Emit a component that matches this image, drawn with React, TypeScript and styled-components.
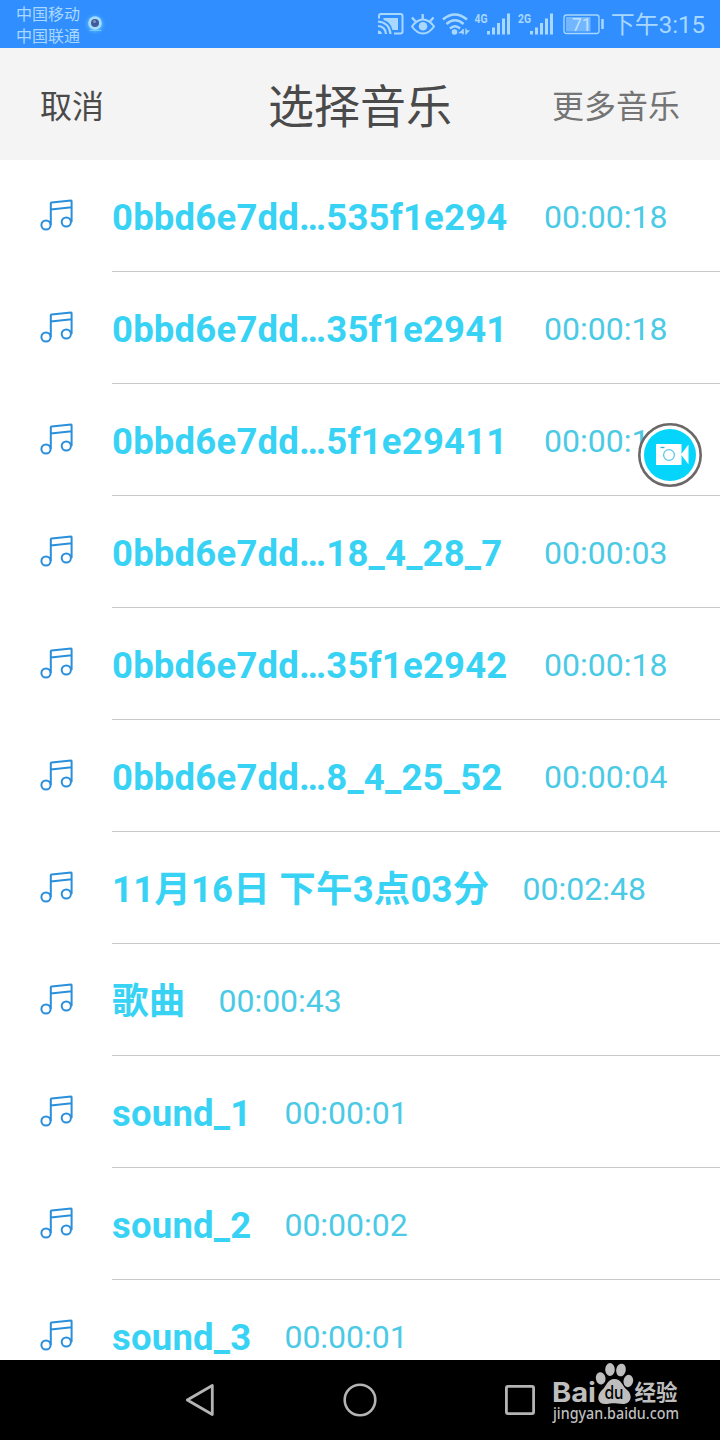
import React from "react";
import styled, { createGlobalStyle } from "styled-components";

const GlobalStyle = createGlobalStyle`
  * { box-sizing: border-box; }
  body { margin: 0; background: #fff; overflow: hidden; }
`;

const Screen = styled.div`
  position: relative;
  display: flex;
  flex-direction: column;
  width: 720px;
  height: 1440px;
  overflow: hidden;
  background: #fff;
  font-family: Roboto, "Noto Sans CJK SC", sans-serif;
`;

const StatusBar = styled.header`
  display: flex;
  flex: none;
  justify-content: space-between;
  height: 48px;
  padding: 0 15px 0 16px;
  background: #318efe;
  color: #a9d8ff;
`;

const CarrierGroup = styled.div`
  display: flex;
  align-items: center;
  gap: 2px;
`;

const Carriers = styled.div`
  padding-top: 3px;
  font-size: 16px;
  line-height: 22px;
`;

const StatusGroup = styled.div`
  display: flex;
  align-items: center;
`;

const Clock = styled.span`
  margin-left: 5px;
  padding-top: 2px;
  font-size: 24px;
  line-height: 46px;
  white-space: nowrap;
`;

const TitleBar = styled.div`
  display: grid;
  flex: none;
  grid-template-columns: 1fr auto 1fr;
  align-items: center;
  height: 112px;
  padding: 0 40px;
  background: #f4f4f4;
`;

const Title = styled.h1`
  margin: 0;
  padding-top: 6px;
  color: #4a4a4a;
  font-size: 46px;
  font-weight: 400;
  line-height: 64px;
`;

const BarAction = styled.button<{ $end?: boolean }>`
  justify-self: ${(p) => (p.$end ? "end" : "start")};
  padding: 5px 0 0;
  border: 0;
  background: none;
  color: ${(p) => (p.$end ? "#747474" : "#4a4a4a")};
  font: 400 32px/44px Roboto, "Noto Sans CJK SC", sans-serif;
`;

const TrackList = styled.ul`
  flex: 1;
  min-height: 0;
  margin: 0;
  padding: 0;
  overflow: hidden;
  list-style: none;
`;

const TrackRow = styled.li`
  display: flex;
  height: 112px;
  padding-left: 40px;
`;

const NoteIcon = styled.svg`
  flex: none;
  width: 34px;
  height: 34px;
  margin: 38px 38px 0 0;
`;

const TrackBody = styled.div`
  display: flex;
  flex: 1;
  align-items: center;
  padding-top: 3px;
  border-bottom: 1px solid #c8c8c8;
  white-space: nowrap;
`;

const TrackName = styled.span<{ $full?: boolean }>`
  width: ${(p) => (p.$full ? "399px" : "auto")};
  margin-right: 33px;
  padding-top: 2px;
  color: #38d3f4;
  font-size: 36.5px;
  font-weight: 700;
  letter-spacing: 0.2px;
  line-height: 48px;
`;

const TrackTime = styled.span`
  color: #4bcae5;
  font-size: 32px;
  line-height: 48px;
`;

const RecordBubble = styled.svg`
  position: absolute;
  top: 422px;
  left: 637px;
  width: 66px;
  height: 66px;
`;

const NavBar = styled.nav`
  position: relative;
  flex: none;
  height: 80px;
  background: #000;
`;

const NavKeys = styled.div`
  display: flex;
  align-items: center;
  justify-content: space-between;
  height: 80px;
  padding: 0 184px;
`;

const Watermark = styled.svg`
  position: absolute;
  top: 0;
  left: 545px;
  width: 150px;
  height: 75px;
`;

type Track = { name: string; time: string; full?: boolean };

const tracks: Track[] = [
  { name: "0bbd6e7dd…535f1e294", time: "00:00:18", full: true },
  { name: "0bbd6e7dd…35f1e2941", time: "00:00:18", full: true },
  { name: "0bbd6e7dd…5f1e29411", time: "00:00:18", full: true },
  { name: "0bbd6e7dd…18_4_28_7", time: "00:00:03", full: true },
  { name: "0bbd6e7dd…35f1e2942", time: "00:00:18", full: true },
  { name: "0bbd6e7dd…8_4_25_52", time: "00:00:04", full: true },
  { name: "11月16日 下午3点03分", time: "00:02:48" },
  { name: "歌曲", time: "00:00:43" },
  { name: "sound_1", time: "00:00:01" },
  { name: "sound_2", time: "00:00:02" },
  { name: "sound_3", time: "00:00:01" },
];

const Note = () => (
  <NoteIcon viewBox="0 0 34 34" fill="none" stroke="#2b8fdb" strokeWidth="2">
    <circle cx="6" cy="27" r="4.600" />
    <circle cx="26.300" cy="24" r="4.600" />
    <path d="M10.800 27V5.300Q10.800 4.600 11.600 4.500L31 2.600Q31.600 2.600 31.600 3.300V24M10.800 11.600L31.600 9.200" />
  </NoteIcon>
);

const Tracker = () => (
  <svg width="26" height="26" viewBox="0 0 26 26">
    <defs>
      <radialGradient id="glow">
        <stop offset=".45" stopColor="#55bfff" />
        <stop offset="1" stopColor="#318efe" stopOpacity="0" />
      </radialGradient>
    </defs>
    <circle cx="13" cy="13" r="12" fill="url(#glow)" />
    <circle cx="13" cy="12" r="6.800" fill="#a5dcff" />
    <circle cx="13" cy="12" r="4" fill="#405b9c" />
    <circle cx="12.500" cy="10.500" r="1.600" fill="#7c91bd" />
    <path d="M7.500 19.500h12" stroke="#74c8ff" />
  </svg>
);

const bars = (x: number) => (
  <path
    d={`M${x} 34.500v-3.500M${x + 5} 34.500v-7M${x + 10} 34.500v-11.500M${x + 15} 34.500v-16M${x + 20} 34.500v-21`}
    strokeWidth="3"
  />
);

const StatusIcons = () => (
  <svg width="230" height="48" viewBox="376 0 230 48" fill="none" stroke="#a9d8ff">
    <path d="M379 18.500V16q0-2 2-2h19.500q2 0 2 2v15.500q0 2-2 2H394" strokeWidth="2" />
    <path d="M383.500 18H398v12h-5.500Q390.500 21.500 383.500 20z" fill="#a9d8ff" stroke="none" />
    <path d="M378 21.500Q389.500 22.500 390.500 34M378 26Q385.500 26.500 386 34" strokeWidth="2.200" />
    <path d="M378 30.500q3.500 0 4 3.500h-4z" fill="#a9d8ff" stroke="none" />
    <path d="M412 26.500Q417 19.500 423 19.500T434 26.500Q429 33.500 423 33.500T412 26.500Z" strokeWidth="2" />
    <circle cx="423" cy="26.300" r="4.300" fill="#a9d8ff" stroke="none" />
    <path d="M422.700 19v-5M415.500 21.500l-3.500-4M430 21.500l3.500-4" strokeWidth="2.300" />
    <path d="M443 19.500q11.700-10 24 0M446.500 24q8.500-7.500 17 0M450 28.500q5-4.500 10 0" strokeWidth="2.500" />
    <circle cx="454.500" cy="32" r="2.800" fill="#a9d8ff" stroke="none" />
    <path d="M463 29v5.500M464 29.500l-4 3h4M466 34.500v-6M465.500 34l3-3h-3" strokeWidth="1.300" />
    {bars(488.500)}
    {bars(531.500)}
    <rect x="564" y="15" width="35" height="18.500" rx="2.500" strokeWidth="1.300" />
    <rect x="566" y="17" width="24.500" height="14.500" fill="#72b6ff" stroke="none" />
    <path d="M602.500 19v10" strokeWidth="2.500" />
    <g fill="#a9d8ff" stroke="none" fontFamily="Roboto, sans-serif">
      <text x="474.500" y="22.500" fontSize="13.500" fontWeight="700" textLength="13" lengthAdjust="spacingAndGlyphs">4G</text>
      <text x="518" y="22.500" fontSize="13.500" fontWeight="700" textLength="13" lengthAdjust="spacingAndGlyphs">2G</text>
      <text x="572" y="30.500" fontSize="17.500" fill="#c0e3ff">71</text>
    </g>
  </svg>
);

export default function App() {
  return (
    <Screen>
      <GlobalStyle />
      <StatusBar>
        <CarrierGroup>
          <Carriers>
            <div>中国移动</div>
            <div>中国联通</div>
          </Carriers>
          <Tracker />
        </CarrierGroup>
        <StatusGroup>
          <StatusIcons />
          <Clock>下午3:15</Clock>
        </StatusGroup>
      </StatusBar>
      <TitleBar>
        <BarAction>取消</BarAction>
        <Title>选择音乐</Title>
        <BarAction $end>更多音乐</BarAction>
      </TitleBar>
      <TrackList>
        {tracks.map((t) => (
          <TrackRow key={t.name}>
            <Note />
            <TrackBody>
              <TrackName $full={t.full}>{t.name}</TrackName>
              <TrackTime>{t.time}</TrackTime>
            </TrackBody>
          </TrackRow>
        ))}
      </TrackList>
      <NavBar>
        <NavKeys>
          <svg width="32" height="36" viewBox="0 0 32 36" fill="none" stroke="#b4b4b4" strokeWidth="2.800" strokeLinejoin="round">
            <path d="M3.300 18L28.300 3.500V32.500Z" />
          </svg>
          <svg width="36" height="36" viewBox="0 0 36 36" fill="none" stroke="#b4b4b4" strokeWidth="2.600">
            <circle cx="18" cy="18" r="15.300" />
          </svg>
          <svg width="32" height="36" viewBox="0 0 32 36" fill="none" stroke="#b4b4b4" strokeWidth="2.800">
            <rect x="2.400" y="4.400" width="27.200" height="27.200" rx="1.500" />
          </svg>
        </NavKeys>
        <Watermark viewBox="545 1360 150 75" fill="#bebebe">
          <ellipse cx="600.700" cy="1378.300" rx="4.800" ry="6.200" transform="rotate(-10 600.700 1378.300)" />
          <ellipse cx="610" cy="1369.500" rx="4.800" ry="6.400" />
          <ellipse cx="621" cy="1370" rx="4.800" ry="6.400" transform="rotate(12 621 1370)" />
          <ellipse cx="628.300" cy="1381" rx="4.800" ry="6.200" transform="rotate(12 628.300 1381)" />
          <path d="M614.500 1379C621 1379 622 1385 626 1389C634 1395 631 1404 623 1404C617 1404 613 1402.500 607 1404C597 1405 596 1396 602 1390C607 1386 607 1379 614.500 1379Z" />
          <text x="552" y="1401.500" fontFamily="Inter, sans-serif" fontSize="27" fontWeight="700" textLength="44" lengthAdjust="spacingAndGlyphs">Bai</text>
          <text x="604.500" y="1399" fill="#000" fontFamily="Inter, sans-serif" fontSize="18" fontWeight="500" textLength="19" lengthAdjust="spacingAndGlyphs">du</text>
          <text x="634.500" y="1400" fontFamily='"Noto Sans CJK SC", sans-serif' fontSize="22" fontWeight="700" textLength="43" lengthAdjust="spacingAndGlyphs">经验</text>
          <text x="553" y="1418.500" fontFamily='"Noto Sans", sans-serif' fontSize="15.500" fontWeight="500" textLength="126" lengthAdjust="spacingAndGlyphs">jingyan.baidu.com</text>
        </Watermark>
      </NavBar>
      <RecordBubble viewBox="637 422 66 66">
        <circle cx="670" cy="455" r="30.700" fill="#fff" stroke="#6b6867" strokeWidth="2.600" />
        <circle cx="670" cy="455" r="26" fill="#05d5fb" />
        <path d="M656 444h25.500v21H656zM681 454.500l7.500-10v20z" fill="#fff" />
        <circle cx="669" cy="455" r="5.400" fill="none" stroke="#58c4e8" strokeWidth="1.200" />
        <path d="M660.500 447.500h4" stroke="#2bb5de" strokeWidth="1.300" />
      </RecordBubble>
    </Screen>
  );
}
